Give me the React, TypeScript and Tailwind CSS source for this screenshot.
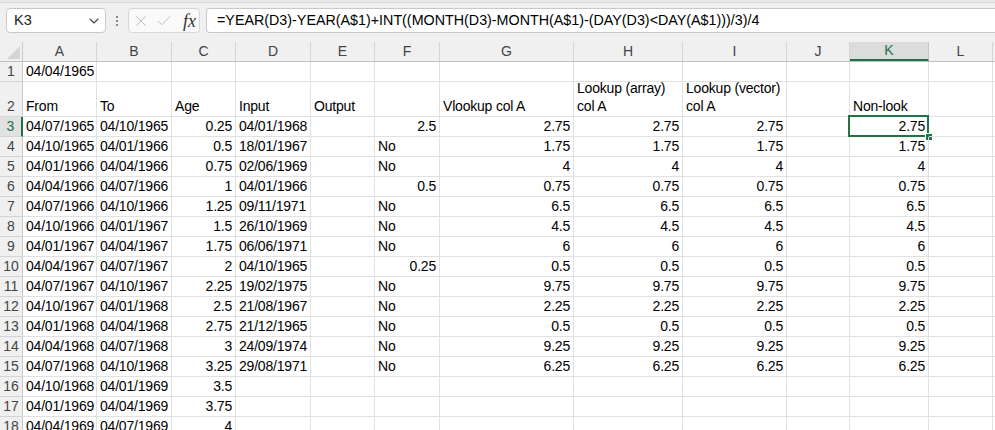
import { ChevronDown, X, Check } from "lucide-react";

type Align = "l" | "r";
type CellData = { t: string; a?: Align } | null;

const COLS = ["A", "B", "C", "D", "E", "F", "G", "H", "I", "J", "K", "L", "M"];
const WIDTHS = [
  "w-[74px]",
  "w-[75px]",
  "w-[64px]",
  "w-[75px]",
  "w-[64px]",
  "w-[65px]",
  "w-[134px]",
  "w-[109px]",
  "w-[104px]",
  "w-[63px]",
  "w-[79px]",
  "w-[64px]",
  "w-[40px]",
];

const dates: [string, string, string, string][] = [
  ["04/07/1965", "04/10/1965", "0.25", "04/01/1968"],
  ["04/10/1965", "04/01/1966", "0.5", "18/01/1967"],
  ["04/01/1966", "04/04/1966", "0.75", "02/06/1969"],
  ["04/04/1966", "04/07/1966", "1", "04/01/1966"],
  ["04/07/1966", "04/10/1966", "1.25", "09/11/1971"],
  ["04/10/1966", "04/01/1967", "1.5", "26/10/1969"],
  ["04/01/1967", "04/04/1967", "1.75", "06/06/1971"],
  ["04/04/1967", "04/07/1967", "2", "04/10/1965"],
  ["04/07/1967", "04/10/1967", "2.25", "19/02/1975"],
  ["04/10/1967", "04/01/1968", "2.5", "21/08/1967"],
  ["04/01/1968", "04/04/1968", "2.75", "21/12/1965"],
  ["04/04/1968", "04/07/1968", "3", "24/09/1974"],
  ["04/07/1968", "04/10/1968", "3.25", "29/08/1971"],
  ["04/10/1968", "04/01/1969", "3.5", ""],
  ["04/01/1969", "04/04/1969", "3.75", ""],
  ["04/04/1969", "04/07/1969", "4", ""],
];

const flags = ["2.5", "No", "No", "0.5", "No", "No", "No", "0.25", "No", "No", "No", "No", "No"];
const results = ["2.75", "1.75", "4", "0.75", "6.5", "4.5", "6", "0.5", "9.75", "2.25", "0.5", "9.25", "6.25"];

function buildRow(i: number): CellData[] {
  const [from, to, age, input] = dates[i];
  const f = flags[i];
  const res = results[i];
  return [
    { t: from },
    { t: to },
    { t: age, a: "r" },
    input ? { t: input } : null,
    null,
    f ? { t: f, a: f === "No" ? "l" : "r" } : null,
    res ? { t: res, a: "r" } : null,
    res ? { t: res, a: "r" } : null,
    res ? { t: res, a: "r" } : null,
    null,
    res ? { t: res, a: "r" } : null,
    null,
    null,
  ];
}

function RowHeader({ n, tall, active }: { n: number; tall?: boolean; active?: boolean }) {
  return (
    <div
      className={
        "w-[23px] shrink-0 flex items-end justify-center leading-5 text-[14px] border-b border-[#d4d4d4] " +
        (tall ? "h-[35px] " : "h-5 ") +
        (active
          ? "bg-[#e1e1e1] text-[#217346] border-r-2 border-r-[#217346]"
          : "bg-[#f0f0f0] text-[#444] border-r border-r-[#c8c8c8]")
      }
    >
      {n}
    </div>
  );
}

function Cell({ w, c, selected }: { w: string; c: CellData; selected?: boolean }) {
  return (
    <div
      className={
        w +
        " h-5 shrink-0 relative border-r border-b border-[#e1e1e1] px-[3px] flex items-end leading-5 whitespace-nowrap tracking-[-0.2px] " +
        (c?.a === "r" ? "justify-end" : "justify-start")
      }
    >
      {c?.t}
      {selected && (
        <>
          <div className="absolute -left-[2px] -top-[2px] -right-px -bottom-px border-2 border-[#217346]" />
          <div className="absolute -right-[4px] -bottom-[4px] w-[7px] h-[7px] bg-[#217346] border-l border-t border-white" />
        </>
      )}
    </div>
  );
}

export default function App() {
  return (
    <div className="w-[995px] h-[430px] overflow-hidden bg-white text-black font-['Liberation_Sans',Arial,sans-serif] text-[14px]">
      {/* FORMULA BAR */}
      <div className="h-[3px] bg-[#e8e8e8] border-b border-[#dadada]" />
      <div className="h-[39px] bg-[#f0f0f0] flex items-start pt-[5px] pl-[6px]">
        <div className="w-[100px] h-[25px] bg-white border border-[#c8c8c8] rounded-[4px] flex items-center justify-between pl-[7px] pr-[3px]">
          <span className="text-[14.5px] text-[#222]">K3</span>
          <ChevronDown size={16} strokeWidth={1.6} className="text-[#444]" />
        </div>
        <div className="w-[22px] h-[25px] flex flex-col items-center justify-center gap-[2px]">
          <span className="w-[2px] h-[2px] bg-[#8a8a8a]" />
          <span className="w-[2px] h-[2px] bg-[#8a8a8a]" />
          <span className="w-[2px] h-[2px] bg-[#8a8a8a]" />
        </div>
        <div className="w-[72px] h-[25px] bg-[#fafafa] border border-[#d8d8d8] rounded-[4px] flex items-center pl-[3px] gap-[5px]">
          <X size={18} strokeWidth={1.2} className="text-[#b8b8b8]" />
          <Check size={18} strokeWidth={1.2} className="text-[#b8b8b8]" />
          <span className="ml-[5px] italic text-[18px] leading-none font-['Liberation_Serif',serif] text-[#333]">fx</span>
        </div>
        <div className="ml-[6px] flex-1 h-[25px] bg-white border border-r-0 border-[#c8c8c8] rounded-l-[4px] flex items-center pl-[10px] text-[14.3px]">
          =YEAR(D3)-YEAR(A$1)+INT((MONTH(D3)-MONTH(A$1)-(DAY(D3)&lt;DAY(A$1)))/3)/4
        </div>
      </div>

      {/* COLUMN HEADERS */}
      <div className="flex h-5 bg-[#f0f0f0] border-b border-[#c0c0c0]">
        <div className="w-[23px] shrink-0 border-r border-[#c8c8c8] flex items-end justify-end p-[2px]">
          <svg width="13" height="13" viewBox="0 0 13 13">
            <polygon points="13,0 13,13 0,13" fill="#d4d4d4" />
          </svg>
        </div>
        {COLS.map((c, i) =>
          c === "K" ? (
            <div
              key={c}
              className={WIDTHS[i] + " shrink-0 bg-[#dcdcdc] text-[#217346] border-r border-[#c8c8c8] border-b-2 border-b-[#217346] flex items-center justify-center"}
            >
              {c}
            </div>
          ) : (
            <div
              key={c}
              className={WIDTHS[i] + " shrink-0 text-[#444] border-r border-[#d4d4d4] flex items-center justify-center"}
            >
              {c === "M" ? "" : c}
            </div>
          )
        )}
      </div>

      {/* ROW 1 */}
      <div className="flex">
        <RowHeader n={1} />
        {WIDTHS.map((w, i) => (
          <Cell key={i} w={w} c={i === 0 ? { t: "04/04/1965" } : null} />
        ))}
      </div>

      {/* ROW 2 */}
      <div className="flex">
        <RowHeader n={2} tall />
        {WIDTHS.map((w, i) => {
          const labels: Record<number, string> = { 0: "From", 1: "To", 2: "Age", 3: "Input", 4: "Output", 6: "Vlookup col A", 10: "Non-look" };
          if (i === 7 || i === 8) {
            return (
              <div key={i} className={w + " h-[35px] shrink-0 border-r border-b border-[#e1e1e1] px-[3px] pb-px flex flex-col justify-end leading-[18px] whitespace-nowrap tracking-[-0.2px]"}>
                <span>{i === 7 ? "Lookup (array)" : "Lookup (vector)"}</span>
                <span>col A</span>
              </div>
            );
          }
          return (
            <div key={i} className={w + " h-[35px] shrink-0 border-r border-b border-[#e1e1e1] px-[3px] flex items-end leading-5 whitespace-nowrap tracking-[-0.2px]"}>
              {labels[i] ?? ""}
            </div>
          );
        })}
      </div>

      {/* DATA ROWS */}
      {dates.map((_, r) => {
        const cells = buildRow(r);
        return (
          <div key={r} className="flex">
            <RowHeader n={r + 3} active={r === 0} />
            {WIDTHS.map((w, i) => (
              <Cell key={i} w={w} c={cells[i]} selected={r === 0 && i === 10} />
            ))}
          </div>
        );
      })}
    </div>
  );
}
